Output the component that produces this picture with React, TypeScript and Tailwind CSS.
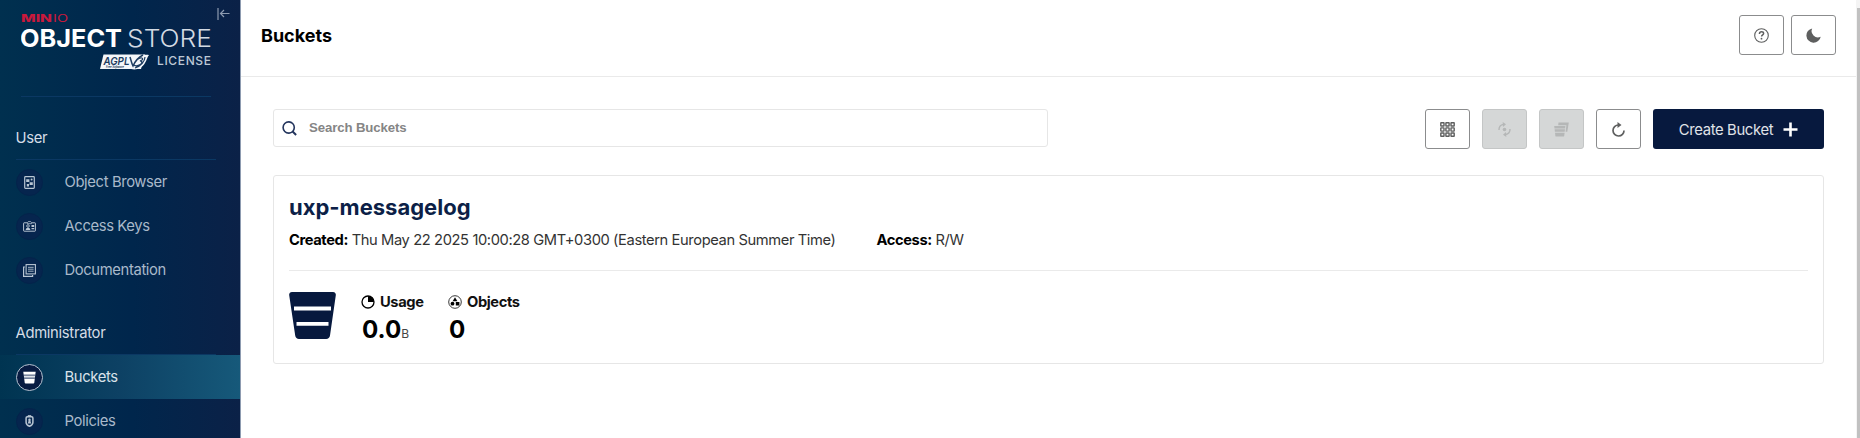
import React from "react";

type IconProps = { className?: string };

const BrowserIcon = () => (
  <svg width="11" height="13" viewBox="0 0 11 13" fill="none">
    <rect x="0.7" y="0.7" width="9.6" height="11.6" rx="0.8" stroke="currentColor" strokeWidth="1.2" />
    <path d="M2.2 3.2h3.200v2.800H2.200zM5.600 6.200h3.200v2.800H5.600zM2.800 8h2.200v2.400H2.800z" fill="currentColor" />
    <circle cx="7.6" cy="3.4" r="1" fill="currentColor" />
  </svg>
);

const KeysIcon = () => (
  <svg width="13" height="11" viewBox="0 0 13 11" fill="none">
    <path d="M4.3 1.8H1.1a.5.5 0 0 0-.5.5v7.4c0 .3.2.5.5.5h10.8c.3 0 .5-.2.5-.5V2.300a.5.5 0 0 0-.5-.5H8.700" stroke="currentColor" strokeWidth="1" />
    <path d="M4.500 1.700 5.300.6h2.400l.8 1.100v1h-4z" stroke="currentColor" strokeWidth=".8" />
    <circle cx="5" cy="5" r="1.300" stroke="currentColor" strokeWidth=".9" />
    <path d="M2.700 9c0-1.500 1-2.300 2.300-2.300S7.300 7.500 7.300 9z" fill="currentColor" />
    <path d="M8.500 4h2.700v2H8.500zM8.500 7h2.700v1.200H8.500z" fill="currentColor" />
  </svg>
);

const DocsIcon = () => (
  <svg width="13" height="13" viewBox="0 0 13 13" fill="none" stroke="currentColor">
    <rect x="3.100" y=".6" width="9.300" height="9.300" strokeWidth="1.100" />
    <path d="M1.900 3H.6v9.400h9v-1.300" strokeWidth="1.200" />
    <path d="M5 3.300h5.600M5 5.200h5.600M5 7.200h5.600" strokeWidth=".9" />
  </svg>
);

const PolicyIcon = () => (
  <svg width="9" height="12" viewBox="0 0 9 12" fill="none">
    <path d="M3 1.700V.700h3v1" stroke="currentColor" strokeWidth="1" />
    <path d="M4.500 1.700h2.200c.7 0 1.200.5 1.200 1.200v4.500c0 1.800-1.400 3-3.400 3.900-2-.9-3.400-2.100-3.400-3.900V2.900c0-.7.5-1.200 1.200-1.200z" stroke="currentColor" strokeWidth="1.500" />
    <circle cx="4.500" cy="4.700" r="1.200" fill="currentColor" />
    <path d="M3.700 5.300h1.600l.9 3.200H2.800z" fill="currentColor" />
  </svg>
);

const BucketSmall = () => (
  <svg width="13" height="13" viewBox="0 0 13 13">
    <path d="M.3.800h12.400l-.4 2.900H.7z" fill="#fff" />
    <path d="M.8 4.500h11.400l-.3 2.200H1.100z" fill="#dfe4eb" />
    <path d="M1.200 7.700h10.600l-.5 4.100c-.1.500-.4.700-.8.700h-8c-.4 0-.7-.2-.8-.7z" fill="#fff" />
    <path d="M.7 3.700h11.600v.8H.7zM1.100 6.700h10.800v1H1.100z" fill="#8290aa" />
  </svg>
);

const BucketIcon = ({ className }: IconProps) => (
  <svg className={className} width="47" height="47" viewBox="0 0 47 47">
    <path d="M3 0h41c1.900 0 3.100 1.500 2.800 3.300L41 43.600c-.3 2-1.800 3.400-3.800 3.400H10c-2 0-3.500-1.400-3.800-3.400L.2 3.300C-.1 1.500 1.100 0 3 0Z" fill="#07193e" />
    <path d="M5 14.500h37v4H5zM7.500 30h32v3.700h-32z" fill="#fff" />
  </svg>
);

const HelpIcon = () => (
  <svg width="15" height="15" viewBox="0 0 15 15" fill="none" stroke="currentColor">
    <circle cx="7.500" cy="7.500" r="6.800" strokeWidth="1.100" />
    <path d="M5.500 6V5.500c0-1.100.9-1.800 2.100-1.800s2 .7 2 1.700c0 1.500-2 1.500-2 3.200" strokeWidth="1.500" />
    <circle cx="7.500" cy="10.700" r=".9" fill="currentColor" stroke="none" />
  </svg>
);

const MoonIcon = () => (
  <svg width="15" height="15" viewBox="0 0 15 15">
    <path d="M6.200.4A7.200 7.200 0 1 0 14.700 8.700 6.300 6.300 0 0 1 6.200.4Z" fill="currentColor" />
  </svg>
);

const GridIcon = () => (
  <svg width="15" height="15" viewBox="0 0 15 15" fill="none" stroke="currentColor" strokeWidth="1.400">
    {[0.8, 5.9, 11].map((y) =>
      [0.8, 5.9, 11].map((x) => <rect key={`${x}-${y}`} x={x} y={y} width="3.200" height="3.200" rx=".3" />)
    )}
  </svg>
);

const ReplicateIcon = () => (
  <svg width="13" height="15" viewBox="0 0 13 15" fill="none" stroke="currentColor" strokeWidth="1.400">
    <path d="M1 8C.9 5 2.600 2.900 5.500 2.400" />
    <path d="M4.700 0 8 2.300 5 4.900z" fill="currentColor" stroke="none" />
    <path d="M12 7c.1 3-1.600 5.100-4.500 5.600" />
    <path d="M8.300 15 5 12.700l3-2.600z" fill="currentColor" stroke="none" />
    <circle cx="6.500" cy="7.500" r="1.800" fill="currentColor" stroke="none" />
  </svg>
);

const MultiBucketIcon = () => (
  <svg width="15" height="15" viewBox="0 0 15 15" fill="currentColor">
    <path d="M4.500.4h10.300l-1.500 9.300h-1.700l.8-6.500H4.200z" />
    <path d="M.2 4h11.200l-.3 2.400H.5zM.6 7.300H11l-.3 2.500H.9zM1 10.700h9.600l-.4 3.200c-.1.400-.4.600-.8.600H2.200c-.4 0-.7-.2-.8-.6z" />
  </svg>
);

const RefreshIcon = () => (
  <svg width="13" height="15" viewBox="0 0 13 15" fill="none">
    <path d="M6.500 3A5.500 5.500 0 1 0 12 8.400" stroke="currentColor" strokeWidth="1.700" />
    <path d="M5.500 0 9.500 3 5.500 6z" fill="currentColor" />
  </svg>
);

const SearchIcon = () => (
  <svg width="15" height="15" viewBox="0 0 15 15" fill="none" stroke="#23355d">
    <circle cx="6.700" cy="6.500" r="5.600" strokeWidth="1.600" />
    <path d="m10.600 10.600 3.500 3.300" strokeWidth="2" />
  </svg>
);

const UsageIcon = () => (
  <svg width="14" height="14" viewBox="0 0 14 14" fill="none">
    <circle cx="7" cy="7" r="6" stroke="#000" strokeWidth="1.300" />
    <path d="M7 1v6h6A6 6 0 0 0 7 1Z" fill="#000" />
  </svg>
);

const ObjectsIcon = () => (
  <svg width="14" height="14" viewBox="0 0 14 14" fill="none">
    <circle cx="7" cy="7" r="6.300" stroke="#222" strokeWidth=".9" />
    <path d="M7 2.300 9.400 6.200H4.600z" fill="#000" />
    <circle cx="4.500" cy="8.700" r="1.900" fill="#000" />
    <path d="M7.800 7h3.600v3.500H7.800z" fill="#000" />
  </svg>
);

const Logo = () => (
  <svg width="192" height="60" viewBox="0 0 192 60" className="font-['Inter',sans-serif]">
    <text x="0" y="10.500" fontSize="9.800" fontWeight="800" fill="#c8193c" textLength="31" lengthAdjust="spacingAndGlyphs">MIN</text>
    <text x="32" y="10.500" fontSize="9.800" fontWeight="400" fill="#c8193c" textLength="15" lengthAdjust="spacingAndGlyphs">IO</text>
    <text x="-1" y="36" fontSize="24.500" fontWeight="700" fill="#fff" textLength="102" lengthAdjust="spacingAndGlyphs">OBJECT</text>
    <text x="106" y="36" fontSize="24.500" fontWeight="300" fill="#d3dae3" textLength="85" lengthAdjust="spacingAndGlyphs">STORE</text>
    <text x="136" y="54" fontSize="12" fontWeight="500" fill="#bcc8d5" textLength="54">LICENSE</text>
    <path d="M82.500 43.500H124l-4 14.500H79z" fill="#f4f7fa" />
    <path d="M112 56c-3-5-1-9 5-11 4-1 8-1.500 11-1-2 2-2 5-4 8-3 5-8 7.500-14 6z" fill="#f4f7fa" />
    <text x="82.500" y="54" fontSize="11" fontWeight="600" fontStyle="italic" fill="#1d3c60" textLength="26" lengthAdjust="spacingAndGlyphs">AGPL</text>
    <path d="M109 46c1 3 1.500 6 3 9 2-4.500 5-8.500 10-11" fill="none" stroke="#1d3c60" strokeWidth="1.500" />
    <path d="M117 48c3-2 6-1 4 1l-2 1c3 0 2 3-1 4-2 1-4 1-5 0M124 46c0 4-4 9-10 11" fill="none" stroke="#1d3c60" strokeWidth="1.200" />
    <text x="85" y="57.300" fontSize="3" fontWeight="600" fontStyle="italic" fill="#1d3c60" textLength="18">Free Software</text>
  </svg>
);

const NavItem = ({ label, icon, active = false }: { label: string; icon: React.ReactNode; active?: boolean }) => (
  <div className={`flex h-11 items-center pl-4 text-[14.8px] tracking-[-0.38px] ${active ? "bg-gradient-to-r from-[#003451] via-[#0d4164] to-[#16597a] text-[#d9e2ea]" : "text-[#a9b9ca]"}`}>
    <span className={`flex size-[27px] shrink-0 items-center justify-center rounded-full ${active ? "border border-[#b5c2d0] bg-[#081c42]" : "border border-[#04234b] bg-[#06254e] text-[#b9c5d3]"}`}>
      {icon}
    </span>
    <span className="ml-[21.5px]">{label}</span>
  </div>
);

const Section = ({ title, children }: { title: string; children: React.ReactNode }) => (
  <section>
    <div className="mr-6 ml-[15.5px] h-[35px] border-b border-[#0b3863] text-[14.8px] leading-[27px] tracking-[-0.3px] text-[#d5dde6]">{title}</div>
    {children}
  </section>
);

const IconButton = ({ children, disabled = false }: { children: React.ReactNode; disabled?: boolean }) => (
  <button
    disabled={disabled}
    className={`flex h-[40px] w-[45px] items-center justify-center rounded-[3px] border ${disabled ? "border-[#c4c6c6] bg-[#d5d7d7] text-[#b5b7b7]" : "border-[#8b8c8d] bg-white text-[#5e5f5f]"}`}
  >
    {children}
  </button>
);

export default function App() {
  return (
    <div className="flex h-[438px] w-full overflow-hidden bg-white font-['Inter',sans-serif] text-black">
      <aside className="h-full w-[241px] shrink-0 overflow-hidden border-r border-[#8d9bb0] bg-[linear-gradient(90deg,#00304f_0%,#00264c_55%,#0b2147_100%)]">
        <div className="flex h-[96px] items-start">
          <div className="ml-[21px] h-[97px] w-[190px] shrink-0 border-b border-[#0b3863] pt-[11px]">
            <Logo />
          </div>
          <svg className="mt-2 ml-[6px]" width="13" height="12" viewBox="0 0 13 12" fill="none" stroke="#8d9bb0" strokeWidth="1.200">
            <path d="M1 0v12M12.500 5.500H3.500M7 2 3.500 5.500 7 9" />
          </svg>
        </div>
        <div className="flex flex-col gap-[20px] pt-[29px]">
          <Section title="User">
            <div className="pb-[8px]">
              <NavItem label="Object Browser" icon={<BrowserIcon />} />
              <NavItem label="Access Keys" icon={<KeysIcon />} />
              <NavItem label="Documentation" icon={<DocsIcon />} />
            </div>
          </Section>
          <Section title="Administrator">
            <NavItem label="Buckets" icon={<BucketSmall />} active />
            <NavItem label="Policies" icon={<PolicyIcon />} />
          </Section>
        </div>
      </aside>

      <main className="flex min-w-0 flex-1 flex-col">
        <header className="flex h-[77px] items-start justify-between border-b border-[#eaeaea] pt-[15px] pr-5 pl-5">
          <h1 className="text-[18px] leading-[41px] font-bold">Buckets</h1>
          <div className="flex gap-[7px]">
            <IconButton><HelpIcon /></IconButton>
            <IconButton><MoonIcon /></IconButton>
          </div>
        </header>

        <div className="pt-[32px] pr-8 pl-8">
          <div className="flex justify-between">
            <div className="flex h-[38px] w-[775px] items-center rounded-[3px] border border-[#e6e6e6] pl-2">
              <SearchIcon />
              <input
                placeholder="Search Buckets"
                className="ml-3 w-[300px] font-['Liberation_Sans',sans-serif] text-[13.2px] font-bold tracking-[-0.1px] outline-none placeholder:text-[#858585]"
              />
            </div>
            <div className="flex gap-3">
              <IconButton><GridIcon /></IconButton>
              <IconButton disabled><ReplicateIcon /></IconButton>
              <IconButton disabled><MultiBucketIcon /></IconButton>
              <IconButton><RefreshIcon /></IconButton>
              <button className="flex h-[40px] w-[171px] items-center justify-center gap-[10px] rounded-[3px] bg-[#07193e] text-[14.8px] tracking-[-0.34px] text-[#e0e3e8]">
                <span className="pt-[2px]">Create Bucket</span>
                <svg width="15" height="15" viewBox="0 0 15 15" stroke="#fff" strokeWidth="2.600">
                  <path d="M7.500.5v14M.5 7.500h14" />
                </svg>
              </button>
            </div>
          </div>

          <article className="mt-[26px] h-[189px] rounded-[3px] border border-[#e6e6e6] px-[15px] pt-[17px]">
            <h2 className="text-[22px] leading-[28px] font-bold text-[#0c1f47]">uxp-messagelog</h2>
            <div className="mt-[7px] flex h-[43px] gap-[41px] border-b border-[#eaeaea] text-[14.7px] leading-[24px] tracking-[-0.39px] text-[#333]">
              <p><b className="font-bold text-black">Created:</b> Thu May 22 2025 10:00:28 GMT+0300 (Eastern European Summer Time)</p>
              <p><b className="font-bold text-black">Access:</b> R/W</p>
            </div>
            <div className="flex pt-[21px]">
              <BucketIcon />
              <div className="ml-[25px] w-[87px]">
                <div className="flex h-5 items-center gap-[5px] text-[14.7px] font-bold tracking-[-0.4px] text-[#111]"><UsageIcon />Usage</div>
                <div className="flex items-baseline pt-[4px] pl-px text-[24.2px] leading-[28px] font-bold">0.0<span className="text-[12px] font-normal text-[#444]">B</span></div>
              </div>
              <div>
                <div className="flex h-5 items-center gap-[5px] text-[14.7px] font-bold tracking-[-0.4px] text-[#111]"><ObjectsIcon />Objects</div>
                <div className="pt-[4px] pl-px text-[24.2px] leading-[28px] font-bold">0</div>
              </div>
            </div>
          </article>
        </div>
      </main>

      <div className="flex w-1 shrink-0 flex-col bg-[#f4f4f4] pt-2 pl-px">
        <div className="flex-1 bg-[#c1c1c1]" />
      </div>
    </div>
  );
}
